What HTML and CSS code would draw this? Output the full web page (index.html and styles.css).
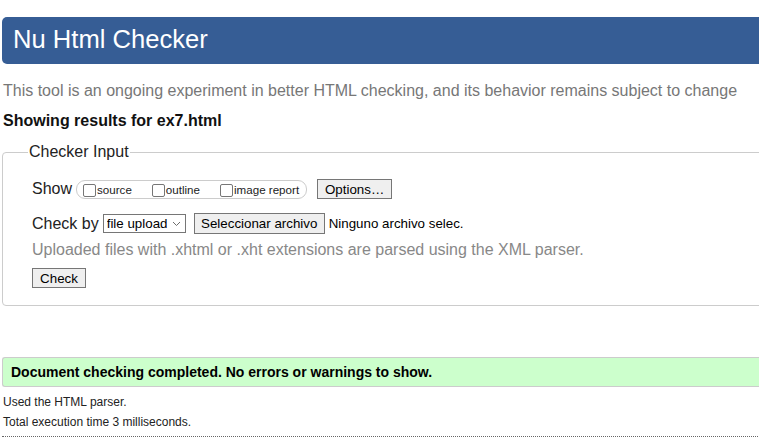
FILE: index.html
```html
<!DOCTYPE html>
<html lang="en">
<head>
<meta charset="utf-8">
<title>Showing results for ex7.html - Nu Html Checker</title>
<link rel="stylesheet" href="styles.css">
</head>
<body>
<div class="page">
  <h1 class="banner">Nu Html Checker</h1>
  <p class="intro">This tool is an ongoing experiment in better HTML checking, and its behavior remains subject to change</p>
  <p class="showing">Showing results for ex7.html</p>

  <fieldset class="checker">
    <legend class="checker-legend">Checker Input</legend>
    <div class="row row-show">
      <span class="row-label">Show</span>
      <span class="pill">
        <label class="opt"><input type="checkbox" class="cb"><span>source</span></label>
        <label class="opt"><input type="checkbox" class="cb"><span>outline</span></label>
        <label class="opt last"><input type="checkbox" class="cb"><span>image report</span></label>
      </span>
      <button type="button" class="btn btn-options">Options…</button>
    </div>
    <div class="row row-check">
      <span class="row-label">Check by</span>
      <span class="select-wrap">
        <select class="select"><option>file upload</option></select>
        <svg class="chev" width="9" height="6" viewBox="0 0 9 6"><path d="M1 1l3.5 3.5L8 1" fill="none" stroke="#6d6d6d" stroke-width="1"/></svg>
      </span>
      <button type="button" class="btn btn-file">Seleccionar archivo</button>
      <span class="file-name">Ninguno archivo selec.</span>
    </div>
    <p class="note">Uploaded files with .xhtml or .xht extensions are parsed using the XML parser.</p>
    <div class="row row-submit">
      <button type="button" class="btn btn-check">Check</button>
    </div>
  </fieldset>

  <div class="success">Document checking completed. No errors or warnings to show.</div>
  <p class="details">Used the HTML parser.</p>
  <p class="details">Total execution time 3 milliseconds.</p>
  <hr class="dots">
</div>
</body>
</html>
```

FILE: styles.css
```css
html {
  overflow: hidden;
  background: #fff;
}
body {
  margin: 0;
  font-family: "Liberation Sans", Arial, sans-serif;
  color: #222;
}
.page {
  width: 820px;
  padding: 17px 0 0 2px;
}
.banner {
  margin: 0;
  background: #365d95;
  color: #fff;
  font-weight: normal;
  font-size: 25.6px;
  line-height: 29px;
  padding: 8px 12px 10px 11px;
  border-radius: 5px 0 0 5px;
}
.intro {
  margin: 18px 0 0 1px;
  font-size: 16px;
  line-height: 18px;
  color: #777;
}
.showing {
  margin: 12px 0 0 1px;
  font-size: 16px;
  line-height: 18px;
  font-weight: bold;
  color: #111;
}
.checker {
  margin: 13px 0 0 0;
  border: 1px solid #ccc;
  border-radius: 4px;
  padding: 18px 10px 17px 29px;
  min-width: 0;
}
.checker-legend {
  font-size: 16px;
  line-height: 18px;
  padding: 0 1px;
  margin-left: -4px;
  color: #222;
}
.row {
  display: flex;
  align-items: center;
}
.row-label {
  font-size: 16px;
  line-height: 18px;
}
.row-show {
  height: 20px;
}
.row-show .row-label {
  margin-right: 4px;
}
.pill {
  display: inline-flex;
  align-items: center;
  height: 17px;
  border: 1px solid #ccc;
  border-radius: 9px;
  padding: 0 7px 0 6px;
}
.opt {
  display: inline-flex;
  align-items: center;
  font-size: 11.6px;
  margin-right: 20px;
}
.opt.last {
  margin-right: 0;
}
.cb {
  appearance: none;
  -webkit-appearance: none;
  width: 13px;
  height: 13px;
  margin: 2px 1px 0 0;
  border: 1px solid #767676;
  border-radius: 2px;
  background: #fff;
}
.btn {
  font-family: "Liberation Sans", Arial, sans-serif;
  font-size: 13.33px;
  color: #000;
  background: #efefef;
  border: 1px solid #767676;
  border-radius: 0;
  padding: 0;
  margin: 0;
  text-align: center;
}
.btn-options {
  margin-left: 10px;
  height: 20px;
  width: 75px;
}
.row-check {
  margin-top: 14px;
  height: 21px;
}
.row-check .row-label {
  margin-right: 4px;
}
.select-wrap {
  position: relative;
  display: inline-block;
  height: 19px;
}
.select {
  appearance: none;
  -webkit-appearance: none;
  font-family: "Liberation Sans", Arial, sans-serif;
  font-size: 13.33px;
  color: #000;
  width: 83px;
  height: 19px;
  border: 1px solid #767676;
  border-radius: 0;
  background: #fff;
  padding: 0 0 0 3px;
  margin: 0;
}
.chev {
  position: absolute;
  right: 5px;
  top: 7px;
}
.btn-file {
  margin-left: 8px;
  height: 21px;
  width: 131px;
}
.file-name {
  margin-left: 4px;
  font-size: 13.33px;
  color: #000;
}
.note {
  margin: 7px 0 0 0;
  font-size: 16px;
  line-height: 18px;
  color: #888;
}
.row-submit {
  margin-top: 9px;
}
.btn-check {
  height: 20px;
  width: 54px;
}
.success {
  margin-top: 51px;
  background: #ccffcc;
  border: 1px solid #ccc;
  border-right: 0;
  border-radius: 3px 0 0 3px;
  font-size: 14px;
  font-weight: bold;
  line-height: 28px;
  padding: 0 8px;
  color: #000;
}
.details {
  margin: 7px 0 0 1px;
  font-size: 12px;
  line-height: 17px;
  color: #222;
}
.details + .details {
  margin-top: 3px;
}
.dots {
  margin: 5px 0 0 0;
  border: 0;
  border-top: 1px dotted #666;
  height: 0;
}
```
